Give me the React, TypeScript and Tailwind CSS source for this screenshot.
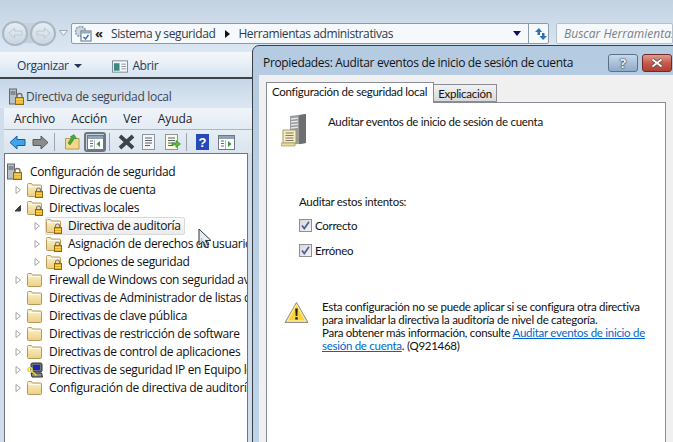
import type { ReactNode } from "react"

const UI_FONT = "font-['Open_Sans','Noto_Sans',sans-serif]"

function Folder({ lock }: { lock?: boolean }) {
  return (
    <svg width="16" height="16" viewBox="0 0 16 16" className="shrink-0">
      <defs>
        <linearGradient id="fold" x1="0" y1="0" x2="0" y2="1">
          <stop offset="0" stopColor="#fdf3c9" />
          <stop offset="1" stopColor="#eccf86" />
        </linearGradient>
      </defs>
      <path d="M.5 3.500V2.500a1 1 0 0 1 1-1h3l1 1.500h8a1 1 0 0 1 1 1v9.500a1 1 0 0 1-1 1h-12a1 1 0 0 1-1-1z" fill="url(#fold)" stroke="#b79a5a" />
      <path d="M1.500 4.500h12" stroke="#fffbe8" />
      {lock && (
        <g>
          <path d="M9.500 9.500V8a2 2 0 0 1 4 0v1.500" fill="none" stroke="#7d7a70" strokeWidth="1.200" />
          <rect x="8.500" y="9.500" width="7" height="6" fill="#e0ad2c" stroke="#8f6a12" />
          <path d="M9 11.500h6M9 13.500h6" stroke="#f5d66e" />
        </g>
      )}
    </svg>
  )
}

function Expander({ open, hidden }: { open?: boolean; hidden?: boolean }) {
  if (hidden) return <span className="w-[10px] mr-[3px] shrink-0" />
  return (
    <svg width="10" height="10" viewBox="0 0 10 10" className="shrink-0 mr-[3px]">
      {open ? <path d="M7.500 2.500v5.500h-5.500z" fill="#3f3f3f" stroke="#3f3f3f" /> : <path d="M3 1.500l4.500 3.500-4.500 3.500z" fill="#fff" stroke="#a6a6a6" />}
    </svg>
  )
}

function ServerLock({ size = 18 }: { size?: number }) {
  return (
    <svg width={size} height={size} viewBox="0 0 18 18" className="shrink-0">
      <rect x="1.500" y="1" width="7" height="15" fill="#b9c0c6" stroke="#5e6870" />
      <path d="M2.500 4h5M2.500 6h5" stroke="#4d565e" />
      <path d="M9 9.500V8a2.500 2.500 0 0 1 5 0v1.500" fill="none" stroke="#77736a" strokeWidth="1.300" />
      <rect x="7.500" y="9.500" width="8" height="7" fill="#e3b130" stroke="#8f6a12" />
      <path d="M8 11.500h7M8 14h7" stroke="#f5d66e" />
    </svg>
  )
}

function IpIcon() {
  return (
    <svg width="16" height="17" viewBox="0 0 16 17" className="shrink-0">
      <rect x="4" y="1" width="11" height="9" rx="1.500" fill="#6b7076" stroke="#2c2f33" />
      <rect x="6" y="3" width="7" height="5" fill="#1b27b8" />
      <path d="M4 11h10.500l1 4h-10.500z" fill="#888c90" stroke="#2c2f33" />
      <circle cx="3" cy="7.500" r="2" fill="none" stroke="#ecd92e" strokeWidth="1.600" />
      <path d="M4.500 9l5 4.500" stroke="#ecd92e" strokeWidth="1.600" />
    </svg>
  )
}

function TreeRow({ level, label, icon, open, noExpander, selected }: {
  level: 0 | 1 | 2
  label: string
  icon: ReactNode
  open?: boolean
  noExpander?: boolean
  selected?: boolean
}) {
  const indent = level === 0 ? "pl-0" : level === 1 ? "pl-[8px]" : "pl-[27px]"
  return (
    <div className={`h-[18px] flex items-center whitespace-nowrap ${indent}`}>
      {level > 0 && <Expander open={open} hidden={noExpander} />}
      <div className={`flex items-center h-[18px] pr-[3px] rounded-[2px] border ${selected ? "border-[#d9d9d9] bg-linear-to-b from-[#fafafa] to-[#ebebeb]" : "border-transparent"}`}>
        {icon}
        <span className="ml-[6px]">{label}</span>
      </div>
    </div>
  )
}

function ToolSep() {
  return <span className="w-px h-[18px] bg-[#9aa5b1] mx-[5px] shrink-0" />
}

function Arrow({ dir, color, stroke }: { dir: "l" | "r"; color: string; stroke: string }) {
  return (
    <svg width="17" height="15" viewBox="0 0 17 15" className="shrink-0">
      <path d={dir === "l" ? "M1 7.500L8 1v3.500h8v6H8V14z" : "M16 7.500L9 1v3.500H1v6h8V14z"} fill={color} stroke={stroke} />
    </svg>
  )
}

function PaneIcon({ dir }: { dir: "l" | "r" }) {
  return (
    <svg width="17" height="15" viewBox="0 0 17 15">
      <rect x="0.500" y="0.500" width="16" height="14" fill="#fff" stroke="#6f7880" />
      <rect x="1" y="1" width="15" height="3" fill="#8fa3b5" />
      <path d="M3 6h3M3 8.500h3M3 11h3" stroke="#5b6d7d" />
      <path d="M7.500 5v9" stroke="#b0b8bf" />
      <path d={dir === "l" ? "M13 6v6l-3.500-3z" : "M10 6v6l3.500-3z"} fill="#2f9a3a" />
    </svg>
  )
}

function DocIcon({ arrow }: { arrow?: boolean }) {
  return (
    <svg width="17" height="16" viewBox="0 0 17 16">
      <rect x="1.500" y="0.500" width="12" height="15" fill={arrow ? "#fbf8e4" : "#f4f6f8"} stroke="#8e969d" />
      <path d="M4 4h7M4 6.500h7M4 9h7M4 11.500h5" stroke="#59626a" />
      {arrow && <path d="M8 9h4V6.500l4.500 3.500-4.500 3.500V11H8z" fill="#5bbb3a" stroke="#2f8a1e" strokeWidth="0.600" />}
    </svg>
  )
}

function Checkbox() {
  return (
    <span className="w-[13px] h-[13px] border border-[#8e8f8f] bg-linear-to-br from-[#d8d8d8] to-[#f4f4f4] flex items-center justify-center shrink-0">
      <svg width="9" height="9" viewBox="0 0 9 9">
        <path d="M1 4.500l2.300 3L8 .8" fill="none" stroke="#4a5f97" strokeWidth="1.700" />
      </svg>
    </span>
  )
}

const dialogText = "font-['Lato',sans-serif] text-[11.5px] tracking-[-0.28px] leading-[13px] text-[#111] whitespace-nowrap"

function Dialog() {
  return (
    <div className={`absolute left-[252px] top-[45px] w-[440px] h-[420px] rounded-tl-[7px] border border-[#3a3f44] bg-linear-to-b from-[#b5cbe1] to-[#bdd4ea] pl-[6px] flex flex-col ${UI_FONT}`}>
      <div className="h-[29px] shrink-0 flex items-center pl-[4px] pt-[5px] relative">
        <span className="text-[12px] tracking-[-0.33px] text-[#101418] whitespace-nowrap">Propiedades: Auditar eventos de inicio de sesión de cuenta</span>
        <div className="absolute left-[349px] top-[8px] flex gap-[4px]">
          <div className="w-[30px] h-[18px] rounded-[3px] border border-[#5b7289] bg-linear-to-b from-[#c7d9ea] via-[#a9c2d9] to-[#8fabc6] flex items-center justify-center text-[13px] font-bold leading-none text-[#f4f4f4] [text-shadow:0_0_1px_#222,0_0_2px_#222]">?</div>
          <div className="w-[30px] h-[18px] rounded-[3px] border border-[#6e2a24] bg-linear-to-b from-[#dd9c91] via-[#c9594c] to-[#b04030] flex items-center justify-center">
            <svg width="14" height="10" viewBox="0 0 14 10">
              <path d="M2.500 1.500l9 7M11.500 1.500l-9 7" stroke="#4b4b4b" strokeWidth="3.400" />
              <path d="M2.500 1.500l9 7M11.500 1.500l-9 7" stroke="#fff" strokeWidth="2" />
            </svg>
          </div>
        </div>
      </div>
      <div className="flex-1 bg-[#f0f0f0] pl-[7px] pt-[7px]">
        <div className="flex items-end h-[21px] relative z-10">
          <div className={`w-[168px] h-[21px] bg-white border border-[#898c95] border-b-0 flex items-center pl-[5px] pb-[3px] ${dialogText}`}>Configuración de seguridad local</div>
          <div className={`w-[63px] h-[18px] mb-px bg-linear-to-b from-[#f2f2f2] to-[#dadada] border border-[#898c95] border-l-0 flex items-center justify-center ${dialogText}`}>Explicación</div>
        </div>
        <div className="w-[400px] h-[400px] mt-[-1px] bg-white border border-[#898c95] pl-[14px] pt-[10px]">
          <div className="flex items-start">
            <svg width="30" height="35" viewBox="0 0 30 35" className="shrink-0">
              <path d="M9 3l16-2v29l-16 2z" fill="#9a9c9f" />
              <path d="M18 2.200l7-1.200v29l-7 1.200z" fill="#6c6e72" />
              <path d="M10 6l7-.8M10 9l7-.8M10 12l7-.8M10 15l7-.8" stroke="#e8e8e8" strokeWidth="1.300" />
              <circle cx="16" cy="27" r="1" fill="#3bd04a" />
              <path d="M2 17h13v13H2z" fill="#f5ecc6" stroke="#a8995f" />
              <path d="M0 30h14v3H0z" fill="#e8d9a0" stroke="#a8995f" strokeWidth="0.700" />
              <path d="M4.500 20h8M4.500 22.500h8M4.500 25h8M4.500 27.500h8" stroke="#7f7a60" />
            </svg>
            <span className={`ml-[17px] mt-[2px] ${dialogText}`}>Auditar eventos de inicio de sesión de cuenta</span>
          </div>
          <div className={`ml-[18px] mt-[47px] ${dialogText}`}>Auditar estos intentos:</div>
          <div className={`ml-[18px] mt-[11px] flex items-center gap-[3px] ${dialogText}`}><Checkbox />Correcto</div>
          <div className={`ml-[18px] mt-[12px] flex items-center gap-[3px] ${dialogText}`}><Checkbox />Erróneo</div>
          <div className="flex items-start ml-[3px] mt-[42px]">
            <svg width="25" height="23" viewBox="0 0 25 23" className="shrink-0 mt-[2px]">
              <path d="M12.500 1.500L24 21.500H1z" fill="#f7d23c" stroke="#8f8f8f" strokeLinejoin="round" />
              <path d="M12.500 3.500L21.500 20H3.500z" fill="none" stroke="#fff4b8" />
              <path d="M11.200 7.500h2.600l-.5 7.500h-1.600z" fill="#222" />
              <rect x="11.300" y="16.200" width="2.400" height="2.400" fill="#222" />
            </svg>
            <p className={`ml-[13px] pt-[1px] ${dialogText}`}>
              Esta configuración no se puede aplicar si se configura otra directiva<br />
              para invalidar la directiva la auditoría de nivel de categoría.<br />
              Para obtener más información, consulte <span className="text-[#0066cc] underline">Auditar eventos de inicio de</span><br />
              <span className="text-[#0066cc] underline">sesión de cuenta</span>. (Q921468)
            </p>
          </div>
        </div>
      </div>
    </div>
  )
}

export default function App() {
  return (
    <div className={`relative w-[673px] h-[442px] overflow-hidden flex flex-col bg-[#cfdded] ${UI_FONT}`}>
      {/* barra de navegacion */}
      <div className="h-[52px] shrink-0 bg-linear-to-b from-[#c3d2e2] to-[#dbe7f3] flex items-end pb-[8px] pl-[2px]">
        <div className="flex items-center h-[24px] mb-[-1px]">
          <div className="flex items-center rounded-full bg-[#c4d0dc] h-[20px]">
            {[0, 1].map((i) => (
              <span key={i} className={`w-[26px] h-[25px] rounded-full border-2 border-[#aab7c4] bg-linear-to-b from-[#e6edf4] to-[#cbd6e1] flex items-center justify-center ${i === 0 ? "mr-[2px]" : ""}`}>
                <svg width="15" height="12" viewBox="0 0 15 12">
                  <path d={i === 0 ? "M1 6L6.500 1v3h7.500v4H6.500v3z" : "M14 6L8.500 1v3H1v4h7.500v3z"} fill="#dbe4ec" stroke="#bcc8d4" />
                </svg>
              </span>
            ))}
          </div>
          <svg width="9" height="6" viewBox="0 0 9 6" className="ml-[3px]"><path d="M.5.500h8L4.500 5.500z" fill="#f1f5f9" stroke="#9aa8b6" /></svg>
        </div>
        <div className="ml-[3px] w-[480px] h-[21px] border border-[#8e9aa6] rounded-[2px] bg-[#f6f9fc] flex items-center text-[12px] tracking-[-0.4px] text-[#2b3b4b] whitespace-nowrap">
          <svg width="18" height="17" viewBox="0 0 18 17" className="ml-[2px] shrink-0">
            <circle cx="6.500" cy="6.500" r="5" fill="#c9d6e3" stroke="#8aa0b5" strokeDasharray="2 1" strokeWidth="1.600" />
            <rect x="7" y="6" width="10" height="10" fill="#fff" stroke="#5e6c78" />
            <rect x="7.500" y="6.500" width="9" height="2" fill="#8fa8bf" />
            <path d="M9.500 12l2 2 3-4" fill="none" stroke="#1f6fc4" strokeWidth="1.400" />
          </svg>
          <span className="ml-[3px] text-[#222] text-[13px] font-bold leading-none w-[16px]">«</span>
          <span>Sistema y seguridad</span>
          <svg width="5" height="8" viewBox="0 0 5 8" className="ml-[10px]"><path d="M0 0l5 4-5 4z" fill="#111" /></svg>
          <span className="ml-[8px]">Herramientas administrativas</span>
          <svg width="8" height="5" viewBox="0 0 8 5" className="ml-[120px]"><path d="M0 0h8L4 5z" fill="#10105c" /></svg>
          <span className="ml-[7px] w-px h-[19px] bg-[#8e9aa6]" />
          <svg width="14" height="14" viewBox="0 0 14 14" className="ml-[5px]">
            <path d="M5 1L1 5h2.500v3h2.500V5h2zM9 13l4-4h-2.500V6H8v3H5.500z" fill="#2f6fb3" />
          </svg>
        </div>
        <div className="ml-[7px] w-[130px] h-[21px] border border-[#b5c0cb] rounded-[2px] bg-[#f6f9fc] flex items-center pl-[7px] text-[12px] italic text-[#7a7f85] whitespace-nowrap overflow-hidden">Buscar Herramientas</div>
      </div>

      {/* barra de comandos */}
      <div className="h-[27px] shrink-0 bg-linear-to-b from-[#f5f8fc] via-[#e6eef7] to-[#d6e3f0] border-b-2 border-[#3c4247] flex items-center pt-[3px] text-[12px] tracking-[-0.4px] text-[#1e395b]">
        <span className="ml-[17px]">Organizar</span>
        <svg width="8" height="4" viewBox="0 0 8 4" className="ml-[6px]"><path d="M0 0h8L4 4z" fill="#1e395b" /></svg>
        <svg width="16" height="13" viewBox="0 0 17 13" className="ml-[30px]">
          <rect x=".5" y=".5" width="16" height="12" fill="#f6f8fa" stroke="#7c8790" />
          <rect x="2" y="3" width="6" height="8" fill="#3d8a84" />
          <path d="M10 4h5M10 6.500h5M10 9h5" stroke="#8a949c" />
        </svg>
        <span className="ml-[4px]">Abrir</span>
      </div>

      {/* ventana de la consola */}
      <div className="flex-1 min-h-0 flex flex-col pl-[4px]">
        <div className="h-[29px] shrink-0 flex items-center ml-[-4px] pl-[8px] pt-[6px] bg-linear-to-b from-[#c6d6e7] to-[#dce7f3] text-[12px] tracking-[-0.3px] text-[#3c4650]">
          <ServerLock />
          <span>Directiva de seguridad local</span>
        </div>
        <div className="h-[22px] shrink-0 bg-linear-to-b from-[#f0f4f9] to-[#e3ebf4] flex items-center pl-[10px] pt-[1px] gap-[16px] text-[12px] tracking-[-0.1px] text-[#1a2430] border-b border-[#a9b7c5]">
          <span>Archivo</span>
          <span>Acción</span>
          <span>Ver</span>
          <span>Ayuda</span>
        </div>
        <div className="h-[23px] shrink-0 bg-linear-to-b from-[#e6edf5] to-[#dae4ef] flex items-center pl-[5px] pt-[1px]">
          <Arrow dir="l" color="#3fa3ee" stroke="#15609f" />
          <span className="w-[6px]" />
          <Arrow dir="r" color="#8c8c8c" stroke="#5a5a5a" />
          <ToolSep />
          <span className="ml-[4px]">
            <svg width="16" height="16" viewBox="0 0 16 16" className="block">
              <path d="M1.500 4.500h13.500v10.500H1.500z" fill="#f4d98a" stroke="#b79a5a" />
              <path d="M4 9l4-6h-2l4-2.500 2.500 4h-2L6 11z" fill="#4aa63a" stroke="#2f7f24" strokeWidth=".5" />
            </svg>
          </span>
          <span className="ml-[4px] mr-[-2px] w-[22px] h-[20px] rounded-[3px] border-2 border-[#6d7680] bg-[#c7d2dd] flex items-center justify-center"><PaneIcon dir="l" /></span>
          <ToolSep />
          <svg width="17" height="16" viewBox="0 0 17 16" className="ml-[3px]">
            <path d="M2 2l13 12M15 2L2 14" stroke="#3f4348" strokeWidth="3.800" />
          </svg>
          <span className="ml-[6px]"><DocIcon /></span>
          <span className="ml-[6px]"><DocIcon arrow /></span>
          <ToolSep />
          <svg width="14" height="16" viewBox="0 0 14 16" className="ml-[4px]">
            <rect width="13" height="16" fill="#2748b8" />
            <text x="6.500" y="13" textAnchor="middle" fontSize="13" fontWeight="700" fill="#fff" fontFamily="Liberation Sans">?</text>
          </svg>
          <span className="ml-[8px]"><PaneIcon dir="r" /></span>
        </div>

        <div className="w-[244px] flex-1 min-h-0 bg-white border border-[#70767c] border-b-0 pt-[9px] overflow-hidden text-[12px] tracking-[-0.33px] text-[#111]">
          <TreeRow level={0} label="Configuración de seguridad" icon={<ServerLock />} />
          <TreeRow level={1} label="Directivas de cuenta" icon={<Folder lock />} />
          <TreeRow level={1} open label="Directivas locales" icon={<Folder lock />} />
          <TreeRow level={2} selected label="Directiva de auditoría" icon={<Folder lock />} />
          <TreeRow level={2} label="Asignación de derechos de usuario" icon={<Folder lock />} />
          <TreeRow level={2} label="Opciones de seguridad" icon={<Folder lock />} />
          <TreeRow level={1} label="Firewall de Windows con seguridad avanzada" icon={<Folder />} />
          <TreeRow level={1} noExpander label="Directivas de Administrador de listas de redes" icon={<Folder />} />
          <TreeRow level={1} label="Directivas de clave pública" icon={<Folder />} />
          <TreeRow level={1} label="Directivas de restricción de software" icon={<Folder />} />
          <TreeRow level={1} label="Directivas de control de aplicaciones" icon={<Folder />} />
          <TreeRow level={1} label="Directivas de seguridad IP en Equipo local" icon={<IpIcon />} />
          <TreeRow level={1} label="Configuración de directiva de auditoría avanzada" icon={<Folder />} />
        </div>
      </div>

      <Dialog />

      {/* puntero del raton */}
      <svg width="14" height="21" viewBox="0 0 14 21" className="absolute left-[198px] top-[228px]">
        <path d="M1 1v16l4-3.500 3 6 2.500-1-3-6H13z" fill="#dfe6ee" fillOpacity=".75" stroke="#30353a" />
      </svg>
    </div>
  )
}
